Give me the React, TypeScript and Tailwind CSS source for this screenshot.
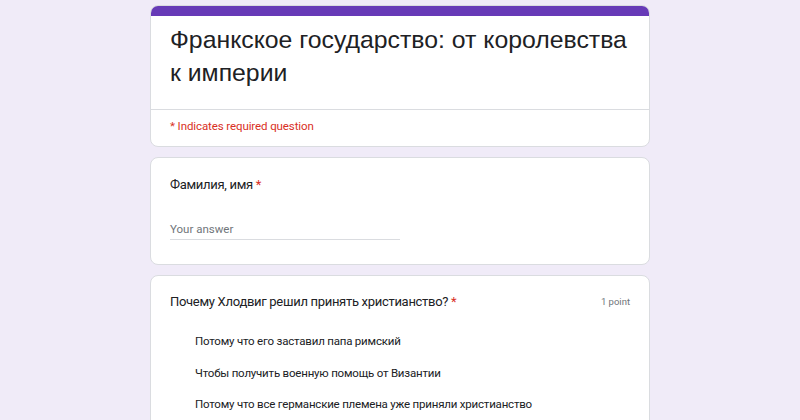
export default function App() {
  const options = [
    "Потому что его заставил папа римский",
    "Чтобы получить военную помощь от Византии",
    "Потому что все германские племена уже приняли христианство",
  ];

  return (
    <div className="min-h-[420px] bg-[#f0ebf8] pt-[5px] font-['Roboto',sans-serif] text-[#202124]">
      <div className="mx-auto flex w-[500px] flex-col gap-[10px]">
        {/* header card */}
        <div className="overflow-hidden rounded-lg border border-[#dadce0] bg-white">
          <div className="h-[10px] bg-[#673ab7]" />
          <div className="pl-[19px] pr-[10px] pt-[7px] pb-[20px]">
            <h1 className="font-['Liberation_Sans',sans-serif] text-[24.8px] leading-[33px] text-[#202124]">
              Франкское государство: от королевства к империи
            </h1>
          </div>
          <div className="border-t border-[#dadce0] px-[19px] pt-[8px] pb-[12px]">
            <p className="text-[11.5px] leading-[16px] tracking-[-0.1px] text-[#d93025]">
              * Indicates required question
            </p>
          </div>
        </div>

        {/* name card */}
        <div className="rounded-lg border border-[#dadce0] bg-white px-[19px] pt-[17px] pb-[24px]">
          <p className="text-[13px] leading-[20px] tracking-[-0.3px]">
            Фамилия, имя <span className="text-[#d93025]">*</span>
          </p>
          <div className="mt-[25px] w-[230px] border-b border-[#dadce0] pb-[2px] leading-[16px]">
            <span className="text-[11.5px] leading-[16px] text-[#70757a]">
              Your answer
            </span>
          </div>
        </div>

        {/* question card */}
        <div className="rounded-lg border border-[#dadce0] bg-white px-[19px] pt-[16px] pb-[20px]">
          <div className="flex items-center justify-between">
            <p className="text-[13px] leading-[20px] tracking-[-0.3px]">
              Почему Хлодвиг решил принять христианство?{" "}
              <span className="text-[#d93025]">*</span>
            </p>
            <span className="text-[9.5px] text-[#70757a]">1 point</span>
          </div>
          <div className="mt-[21px] flex flex-col gap-[15.5px] pl-[25px]">
            {options.map((o) => (
              <p key={o} className="text-[11.5px] leading-[16px] tracking-[-0.2px]">
                {o}
              </p>
            ))}
          </div>
        </div>
      </div>
    </div>
  );
}
